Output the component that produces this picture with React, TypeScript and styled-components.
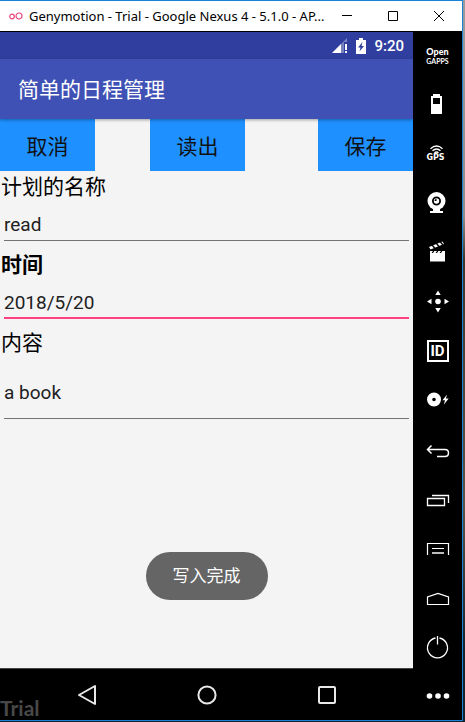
import React from "react";
import styled, { createGlobalStyle } from "styled-components";

const GlobalStyle = createGlobalStyle`
  * { box-sizing: border-box; }
  body { margin: 0; background: linear-gradient(#9b9b9b, #8c8c8c 30%, #3a352c 36%, #5a5347 70%, #14222c 90%); }
  button { border: 0; padding: 0; margin: 0; background: none; color: inherit; font: inherit; cursor: pointer; }
  svg { display: block; }
`;

const Frame = styled.div`
  display: flex;
  flex-direction: column;
  min-height: calc(100vh - 1px);
  margin: 0 2px 1px 0;
  border: solid #1883d7;
  border-width: 1px 1px 1px 0;
  background: #000;
`;

const TitleBar = styled.header`
  display: flex;
  align-items: center;
  height: 30px;
  padding-left: 9px;
  background: #fff;
  color: #000;
  font: 13px/30px "Noto Sans", "Open Sans", sans-serif;
`;

const WindowTitle = styled.h1`
  flex: 1;
  min-width: 0;
  margin: 0 0 0 6px;
  font: inherit;
  white-space: nowrap;
`;

const WindowButton = styled.button`
  display: flex;
  align-items: center;
  justify-content: center;
  width: 46px;
  height: 30px;
`;

const Body = styled.div`
  flex: 1;
  display: flex;
  margin-top: 1px;
`;

const Device = styled.main`
  position: relative;
  flex: 1;
  min-width: 0;
  display: flex;
  flex-direction: column;
  font-family: Roboto, "Noto Sans CJK SC", sans-serif;
`;

const StatusBar = styled.div`
  display: flex;
  align-items: center;
  justify-content: flex-end;
  gap: 8px;
  height: 27px;
  padding-right: 9px;
  background: #303f9f;
  color: #fff;
  font-size: 15px;
  font-weight: 500;
`;

const AppBar = styled.div`
  position: relative;
  display: flex;
  align-items: center;
  height: 60px;
  padding: 0 0 2px 18px;
  background: #3f51b5;
  box-shadow: 0 1px 3px rgba(0, 0, 0, 0.35);
`;

const AppTitle = styled.h2`
  margin: 0;
  color: #fff;
  font-size: 21px;
  font-weight: 400;
`;

const Screen = styled.form`
  position: relative;
  flex: 1;
  display: flex;
  flex-direction: column;
  margin: 0;
  background: #f4f4f4;
`;

const Actions = styled.div`
  display: flex;
  height: 52px;
`;

const ActionButton = styled.button<{ $gap?: string }>`
  && {
    width: 95px;
    margin-left: ${(p) => p.$gap ?? "0"};
    background: #1e90ff;
    color: #111;
    font-size: 21px;
  }
`;

const Label = styled.label<{ $bold?: boolean }>`
  height: 32px;
  padding-left: 1px;
  color: #000;
  font-size: 21px;
  line-height: 32px;
  font-weight: ${(p) => (p.$bold ? 700 : 400)};
`;

const Field = styled.input<{ $active?: boolean; $tall?: boolean }>`
  height: ${(p) => (p.$tall ? "60px" : "38px")};
  margin: 0 4px 8px;
  padding: ${(p) => (p.$tall ? "8px 0 0" : "6px 0 0")};
  border: 0;
  border-bottom: ${(p) => (p.$active ? "2px solid #ff4081" : "1px solid #737373")};
  border-radius: 0;
  outline: 0;
  background: transparent;
  color: #212121;
  font: 19px Roboto, "Noto Sans CJK SC", sans-serif;
`;

const Toast = styled.div`
  position: absolute;
  left: 50%;
  bottom: 68px;
  transform: translateX(-50%);
  padding: 0 27px;
  border-radius: 24px;
  background: #656565;
  color: #fff;
  font-size: 17px;
  line-height: 48px;
  white-space: nowrap;
`;

const NavBar = styled.nav`
  display: flex;
  justify-content: center;
  height: 52px;
  border-top: 1px solid #444;
  background: #000;
`;

const NavButton = styled.button`
  display: flex;
  align-items: center;
  justify-content: center;
  width: 120px;
`;

const Watermark = styled.div`
  position: absolute;
  left: 0;
  bottom: 0;
  color: #484848;
  font: 700 21px/24px Lato, sans-serif;
`;

const Toolbar = styled.aside`
  display: flex;
  flex-direction: column;
  width: 49px;
  background: #000;
  color: #fff;
`;

const Tool = styled.button`
  flex: 1;
  display: flex;
  flex-direction: column;
  align-items: center;
  justify-content: center;
`;

const OpenWord = styled.span`
  height: 10px;
  font: 900 9px/10px Lato, sans-serif;
`;

const GappsWord = styled.span`
  height: 9px;
  font: 700 7px/9px Lato, sans-serif;
`;

const GpsWord = styled.span`
  padding: 0 4px 2px 0;
  font: 700 8px/8px "DejaVu Sans", sans-serif;
`;

const IdBox = styled.span`
  width: 22px;
  height: 22px;
  border: 2px solid #fff;
  text-align: center;
  font: 700 15px/18px Roboto, sans-serif;
`;

const Icon = ({ children }: { children: React.ReactNode }) => (
  <svg width="25" height="25" viewBox="0 0 25 25" fill="#fff" aria-hidden="true">
    {children}
  </svg>
);

const tools: { name: string; art: React.ReactNode }[] = [
  { name: "Open GApps", art: <><OpenWord>Open</OpenWord><GappsWord>GAPPS</GappsWord></> },
  {
    name: "Battery",
    art: <Icon><path fillRule="evenodd" d="M8 1h7v2h2v18H6V3h2zM8 5v6h7V5z" /></Icon>,
  },
  {
    name: "GPS",
    art: (
      <>
        <svg width="18" height="9" viewBox="0 0 18 9" fill="none" stroke="#fff" strokeWidth="1.4" aria-hidden="true">
          <path d="M1.500 3.800Q7.500-1.600 13.500 3.800M3.500 5.800Q7.500 2 11.500 5.800M5.500 7.800Q7.500 6 9.500 7.800" />
        </svg>
        <GpsWord>GPS</GpsWord>
      </>
    ),
  },
  {
    name: "Camera",
    art: (
      <Icon>
        <circle cx="11.500" cy="10" r="9" />
        <path d="M8 17h7v3h3v2H5v-2h3z" />
        <circle cx="11.500" cy="10" r="3.600" stroke="#000" strokeWidth="1.800" />
        <path d="M11.500 10V7.800A2.200 2.200 0 0 0 9.500 10z" fill="#000" />
      </Icon>
    ),
  },
  {
    name: "Capture",
    art: (
      <Icon>
        <path d="M5 10h15v10H5z" />
        <path d="M4 6 17.500.5 19 3 5.500 8.500z" />
        <path d="M7 4l3 3.500M11 2l3 3.500M15 .5l3 3.500M9 9.500l-2 3M13 9.500l-2 3M17 9.500l-2 3" stroke="#000" strokeWidth="1.300" />
        <path d="M5 12h15v8.500H5z" />
      </Icon>
    ),
  },
  {
    name: "Remote control",
    art: (
      <Icon>
        <circle cx="13" cy="11.500" r="2.800" />
        <path d="M13 .5l2.700 4.500h-5.400zM13 22.500l2.700-4.500h-5.400zM2 11.500l4.500-2.700v5.400zM24 11.500l-4.500-2.700v5.400z" />
      </Icon>
    ),
  },
  { name: "Identifiers", art: <IdBox>ID</IdBox> },
  {
    name: "Disk I/O",
    art: (
      <Icon>
        <path fillRule="evenodd" d="M9 4.500a7 7 0 1 0 0 14 7 7 0 0 0 0-14zm0 5.200a1.800 1.800 0 1 1 0 3.600 1.800 1.800 0 0 1 0-3.600z" />
        <path d="M22 6.500l-4.500 5.800h2.600l-1.400 4.500 5-6.300h-2.800z" />
      </Icon>
    ),
  },
  {
    name: "Back",
    art: (
      <Icon>
        <path d="M6.500 8.500 2.500 12.500l4 4M2.500 12.500H20q3.500 0 3.500 3.500t-3.500 3.500h-8" fill="none" stroke="#fff" strokeWidth="1.500" />
      </Icon>
    ),
  },
  {
    name: "Recent apps",
    art: (
      <Icon>
        <path d="M2.500 12.500h17v7h-17zM7 9.500h16.500V17" fill="none" stroke="#fff" strokeWidth="1.300" />
      </Icon>
    ),
  },
  {
    name: "Menu",
    art: (
      <Icon>
        <path d="M2.500 20V8.500h21V20M7 13.500h12" fill="none" stroke="#fff" strokeWidth="1.200" />
        <path d="M7 18h12" stroke="#bbb" strokeWidth="2" />
      </Icon>
    ),
  },
  {
    name: "Home",
    art: (
      <Icon>
        <path d="M2.500 19.500v-7.500L13 8.500 23.500 12v7.500z" fill="none" stroke="#fff" strokeWidth="1.200" />
      </Icon>
    ),
  },
  {
    name: "Power",
    art: (
      <Icon>
        <path d="M10.500 4A10 10 0 1 0 14.500 4M12.500 2v8.500" fill="none" stroke="#fff" strokeWidth="1.300" />
      </Icon>
    ),
  },
  {
    name: "More",
    art: (
      <Icon>
        <circle cx="4.500" cy="13" r="2.800" />
        <circle cx="13" cy="13" r="2.800" />
        <circle cx="21.500" cy="13" r="2.800" />
      </Icon>
    ),
  },
];

export default function App() {
  return (
    <>
      <GlobalStyle />
      <Frame>
        <TitleBar>
          <svg width="14" height="8" viewBox="0 0 14 8" fill="none" stroke="#e8457f" strokeWidth="1.200" aria-hidden="true">
            <circle cx="3" cy="4.500" r="2.300" />
            <circle cx="10" cy="4" r="3" />
          </svg>
          <WindowTitle>Genymotion - Trial - Google Nexus 4 - 5.1.0 - AP...</WindowTitle>
          <WindowButton aria-label="Minimize">
            <svg width="10" height="10" viewBox="0 0 10 10" stroke="#000"><path d="M0 4.500h10" /></svg>
          </WindowButton>
          <WindowButton aria-label="Maximize">
            <svg width="10" height="10" viewBox="0 0 10 10" stroke="#000" fill="none"><path d="M.5.5h9v9h-9z" /></svg>
          </WindowButton>
          <WindowButton aria-label="Close">
            <svg width="10" height="10" viewBox="0 0 10 10" stroke="#000"><path d="M0 0l10 10M10 0 0 10" /></svg>
          </WindowButton>
        </TitleBar>
        <Body>
          <Device>
            <StatusBar>
              <svg width="16" height="15" viewBox="0 0 16 15" fill="#fff" aria-hidden="true">
                <path d="M0 15 15 0v4h-3v11z" opacity=".35" />
                <path d="M0 15 9 6v9zM13 6h2v6h-2zM13 13h2v2h-2z" />
              </svg>
              <svg width="10" height="16" viewBox="0 0 10 16" aria-hidden="true">
                <path d="M3 0h4v2h3v14H0V2h3z" fill="#fff" />
                <path d="M6.500 4 2 9.500h2.500L3.500 13.500 8 8H5.500z" fill="#303f9f" />
              </svg>
              <span>9:20</span>
            </StatusBar>
            <Screen onSubmit={(e) => e.preventDefault()}>
              <AppBar>
                <AppTitle>简单的日程管理</AppTitle>
              </AppBar>
              <Actions>
                <ActionButton type="button">取消</ActionButton>
                <ActionButton type="button" $gap="55px">读出</ActionButton>
                <ActionButton type="submit" $gap="auto">保存</ActionButton>
              </Actions>
              <Label htmlFor="plan-name">计划的名称</Label>
              <Field id="plan-name" defaultValue="read" />
              <Label htmlFor="plan-time" $bold>时间</Label>
              <Field id="plan-time" defaultValue="2018/5/20" $active />
              <Label htmlFor="plan-content">内容</Label>
              <Field id="plan-content" defaultValue="a book" $tall />
              <Toast role="status">写入完成</Toast>
            </Screen>
            <NavBar>
              <NavButton aria-label="Back">
                <svg width="20" height="22" viewBox="0 0 20 22" fill="none" stroke="#e8e8e8" strokeWidth="2" strokeLinejoin="round">
                  <path d="M18 2v18L2 11z" />
                </svg>
              </NavButton>
              <NavButton aria-label="Home">
                <svg width="20" height="20" viewBox="0 0 20 20" fill="none" stroke="#e8e8e8" strokeWidth="2">
                  <circle cx="10" cy="10" r="8.600" />
                </svg>
              </NavButton>
              <NavButton aria-label="Overview">
                <svg width="18" height="18" viewBox="0 0 18 18" fill="none" stroke="#e8e8e8" strokeWidth="2">
                  <rect x="1" y="1" width="16" height="16" rx="1" />
                </svg>
              </NavButton>
            </NavBar>
            <Watermark>Trial</Watermark>
          </Device>
          <Toolbar>
            {tools.map((t) => (
              <Tool key={t.name} aria-label={t.name}>{t.art}</Tool>
            ))}
          </Toolbar>
        </Body>
      </Frame>
    </>
  );
}
